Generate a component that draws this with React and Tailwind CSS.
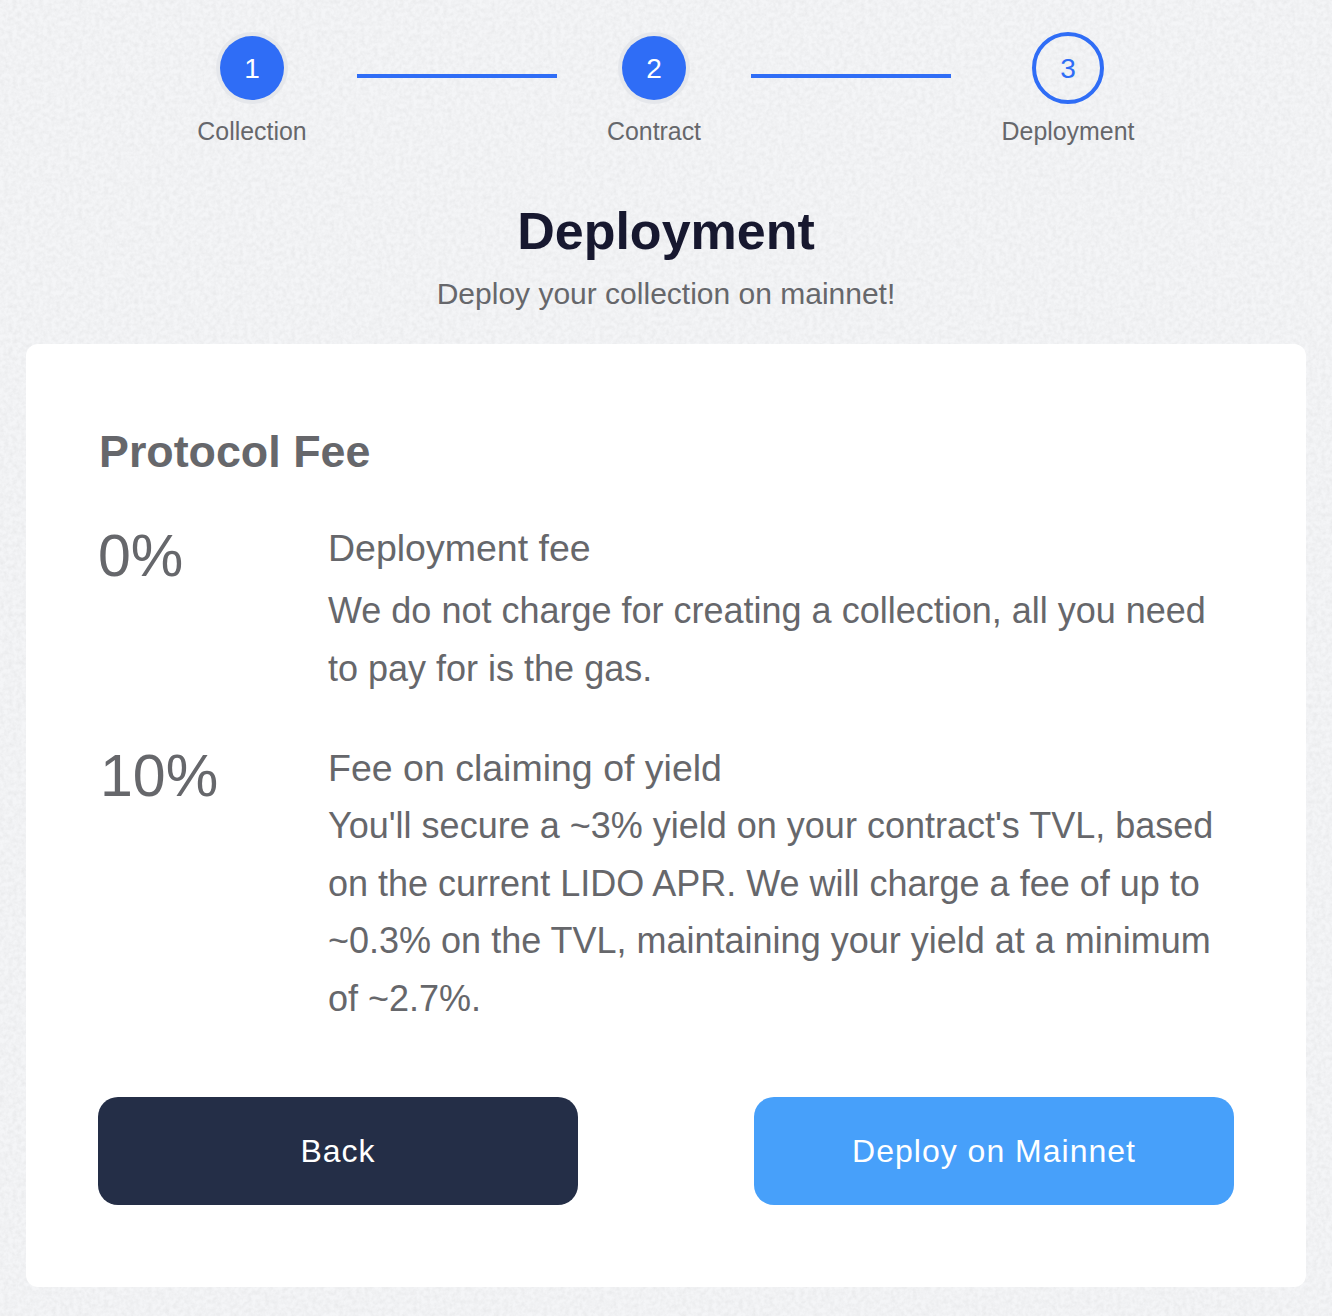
const Step = ({ n, label, current, width }) => (
  <div className={`flex flex-col items-center ${width}`}>
    <div
      className={
        current
          ? "flex size-[72px] items-center justify-center rounded-full border-4 border-[#2f6df6] pt-0.5 text-[28px] text-[#2f6df6]"
          : "flex size-[72px] items-center justify-center rounded-full bg-[#e5e7eb]"
      }
    >
      {current ? (
        n
      ) : (
        <span className="flex size-16 items-center justify-center rounded-full bg-[#2f6df6] pt-0.5 text-[28px] text-white">
          {n}
        </span>
      )}
    </div>
    <span className="mt-[9px] mb-px text-[24.9px] leading-9 whitespace-nowrap">{label}</span>
  </div>
);

const Line = ({ text, className }) => (
  <span className={`block whitespace-nowrap ${className}`}>{text}</span>
);

export default function App() {
  return (
    <main className="relative isolate h-[1316px] w-[1332px] overflow-hidden bg-[#f4f5f7] px-[26px] pt-8 font-['Liberation_Sans',Arial,sans-serif] text-[#66676b]">
      <svg className="absolute inset-0 -z-10 size-full" aria-hidden="true">
        <filter id="grain" x="0" y="0" width="100%" height="100%" colorInterpolationFilters="sRGB">
          <feTurbulence type="fractalNoise" baseFrequency="0.23" numOctaves="3" seed="4" />
          <feColorMatrix values="0 0 0 0 0.5  0 0 0 0 0.5  0 0 0 0 0.5  0.16 0 0 0 -0.05" />
        </filter>
        <rect width="100%" height="100%" filter="url(#grain)" />
      </svg>
      <div className="flex pl-[171px]">
        <Step n="1" label="Collection" width="w-[110px]" />
        <div className="mt-[42px] ml-[50px] h-1 w-[200px] bg-[#2f6df6]" />
        <Step n="2" label="Contract" width="ml-[50px] w-[94px]" />
        <div className="mt-[42px] ml-[50px] h-1 w-[200px] bg-[#2f6df6]" />
        <Step n="3" label="Deployment" current width="ml-[50px] w-[134px]" />
      </div>
      <header className="mt-12 text-center">
        <h1 className="text-[52px] leading-[66px] font-bold text-[#17182f]">Deployment</h1>
        <p className="mt-1 text-[30px] leading-[52px]">Deploy your collection on mainnet!</p>
      </header>
      <section className="mt-6 h-[943px] rounded-xl bg-white px-[72px] pt-[72px]">
        <h2 className="h-[102px] pl-px text-[44.8px] leading-[70px] font-bold">Protocol Fee</h2>
        <div className="flex h-[220px]">
          <div className="w-[230px] text-[59px] leading-[76px]">0%</div>
          <div className="pt-0.5 text-[36px] leading-[57px]">
            <Line text="Deployment fee" className="h-[62px] text-[37.5px]" />
            <Line text="We do not charge for creating a collection, all you need" className="h-[58px]" />
            <Line text="to pay for is the gas." className="h-[58px]" />
          </div>
        </div>
        <div className="flex h-[359px]">
          <div className="w-[230px] pl-0.5 text-[59px] leading-[76px]">10%</div>
          <div className="pt-0.5 text-[36px] leading-[57px]">
            <Line text="Fee on claiming of yield" className="h-[57px] text-[37.5px]" />
            <Line text="You'll secure a ~3% yield on your contract's TVL, based" className="h-[58px]" />
            <Line text="on the current LIDO APR. We will charge a fee of up to" className="h-[57px]" />
            <Line text="~0.3% on the TVL, maintaining your yield at a minimum" className="h-[58px]" />
            <Line text="of ~2.7%." className="h-[58px]" />
          </div>
        </div>
        <div className="flex justify-between text-[32px] tracking-[1px] text-white">
          <button className="h-[108px] w-[480px] rounded-[20px] bg-[#242e47]">Back</button>
          <button className="h-[108px] w-[480px] rounded-[20px] bg-[#47a0fa]">Deploy on Mainnet</button>
        </div>
      </section>
    </main>
  );
}
